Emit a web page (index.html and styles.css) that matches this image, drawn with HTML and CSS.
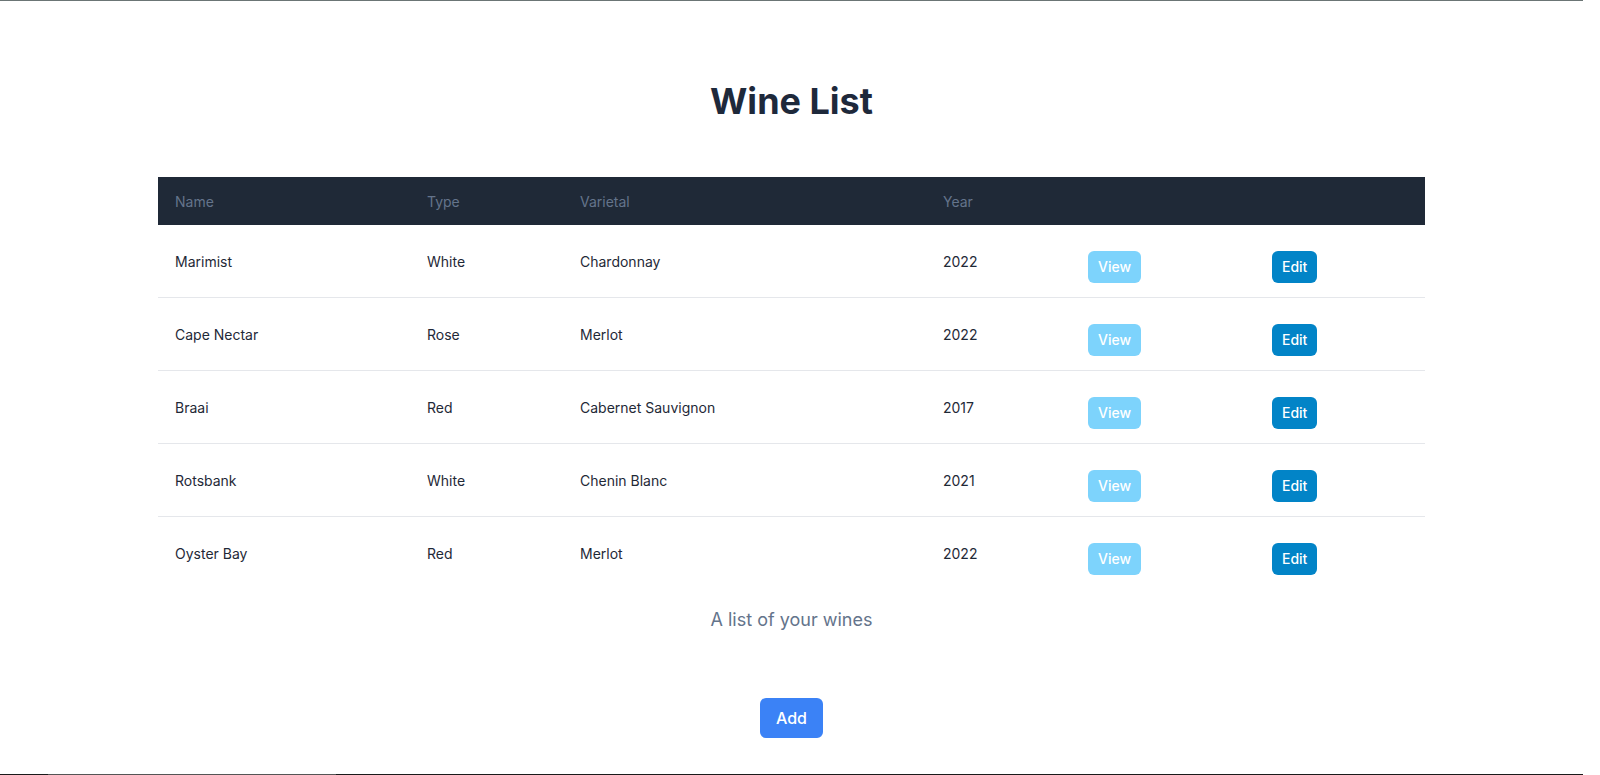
FILE: index.html
```html
<!DOCTYPE html>
<html lang="en">
<head>
<meta charset="utf-8">
<title>Wine List</title>
<link rel="stylesheet" href="styles.css">
</head>
<body>
<div class="topline"></div>
<main class="page">
  <h1 class="title">Wine List</h1>
  <table class="wines">
    <caption class="caption">A list of your wines</caption>
    <colgroup>
      <col class="c-name"><col class="c-type"><col class="c-var"><col class="c-year"><col class="c-view"><col class="c-edit">
    </colgroup>
    <thead>
      <tr><th>Name</th><th>Type</th><th>Varietal</th><th>Year</th><th></th><th></th></tr>
    </thead>
    <tbody>
      <tr><td>Marimist</td><td>White</td><td>Chardonnay</td><td>2022</td><td class="act"><button class="btn btn-view">View</button></td><td class="act"><button class="btn btn-edit">Edit</button></td></tr>
      <tr><td>Cape Nectar</td><td>Rose</td><td>Merlot</td><td>2022</td><td class="act"><button class="btn btn-view">View</button></td><td class="act"><button class="btn btn-edit">Edit</button></td></tr>
      <tr><td>Braai</td><td>Red</td><td>Cabernet Sauvignon</td><td>2017</td><td class="act"><button class="btn btn-view">View</button></td><td class="act"><button class="btn btn-edit">Edit</button></td></tr>
      <tr><td>Rotsbank</td><td>White</td><td>Chenin Blanc</td><td>2021</td><td class="act"><button class="btn btn-view">View</button></td><td class="act"><button class="btn btn-edit">Edit</button></td></tr>
      <tr><td>Oyster Bay</td><td>Red</td><td>Merlot</td><td>2022</td><td class="act"><button class="btn btn-view">View</button></td><td class="act"><button class="btn btn-edit">Edit</button></td></tr>
    </tbody>
  </table>
  <div class="actions"><button class="btn-add">Add</button></div>
</main>
<div class="bottomline"><span class="seg-a"></span><span class="seg-b"></span><span class="seg-c"></span></div>
</body>
</html>
```
FILE: styles.css
```css
html, body { margin: 0; padding: 0; background: #fff; }
body {
  font-family: Inter, "Noto Sans", "Liberation Sans", sans-serif;
  color: #1f2937;
  margin-right: 17px;
}
.topline { height: 1px; background: #6b7575; margin-right: -17px; }
.page { display: flex; flex-direction: column; align-items: center; }
.title {
  margin: 80px 0 0;
  font-size: 36px;
  line-height: 40px;
  font-weight: 700;
  color: #1e293b;
}
.wines {
  width: 80%;
  margin-top: 56px;
  border-collapse: collapse;
  table-layout: fixed;
  font-size: 14px;
  line-height: 20px;
}
.c-name { width: 252px; }
.c-type { width: 153px; }
.c-var { width: 363px; }
.c-year { width: 145px; }
.c-view { width: 184px; }
.c-edit { width: 170px; }
.wines thead tr { background: #1f2937; }
.wines th {
  text-align: left;
  font-weight: 400;
  color: #64748b;
  padding: 15px 17px 13px;
}
.wines td {
  padding: 22px 17px 20px;
  vertical-align: middle;
  border-bottom: 1px solid #e5e7eb;
  color: #1f2937;
}
.wines td.act { padding: 26px 17px 14px; }
.wines tbody tr:last-child td { border-bottom: none; }
.caption {
  caption-side: bottom;
  padding-top: 17px;
  font-size: 18px;
  line-height: 28px;
  color: #64748b;
}
.btn {
  font-family: inherit;
  font-size: 14px;
  line-height: 20px;
  font-weight: 500;
  color: #fff;
  border: none;
  border-radius: 6px;
  padding: 6px 10px;
  display: block;
}
.btn-view { background: #7dd3fc; }
.btn-edit { background: #0284c7; }
.actions { margin-top: 64px; }
.btn-add {
  font-family: inherit;
  font-size: 16px;
  line-height: 24px;
  font-weight: 500;
  color: #fff;
  background: #3b82f6;
  border: none;
  border-radius: 6px;
  padding: 8px 16px;
}
.bottomline {
  position: fixed;
  left: 0;
  bottom: 0;
  width: 1583px;
  height: 1px;
  display: flex;
}
.seg-a { width: 48px; background: #1a1a1a; }
.seg-b { width: 288px; background: #555; }
.seg-c { flex: 1; background: #1a1a1a; }
```
